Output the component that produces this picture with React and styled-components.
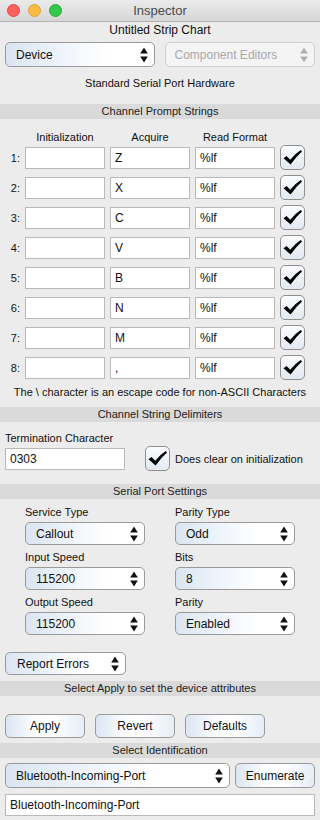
import styled, { createGlobalStyle } from 'styled-components';

const Global = createGlobalStyle`
  html, body {
    margin: 0;
    padding: 0;
    background: #ececec;
  }
  body {
    font-family: "Liberation Sans", Arial, sans-serif;
    color: #1a1a1a;
  }
`;

const Window = styled.div`
  width: 320px;
  height: 820px;
  background: #ececec;
  display: flex;
  flex-direction: column;
  overflow: hidden;
`;

const TitleBar = styled.div`
  height: 21px;
  flex-shrink: 0;
  position: relative;
  display: flex;
  align-items: center;
  justify-content: center;
  background: linear-gradient(#ebebeb, #d6d6d6);
  border-bottom: 1px solid #b3b3b3;
  font-size: 13px;
  color: #4a4a4a;
`;

const Lights = styled.div`
  position: absolute;
  left: 7px;
  top: 4px;
  display: flex;
  gap: 8px;
`;

const Light = styled.span`
  width: 11px;
  height: 11px;
  border-radius: 50%;
  background: ${p => p.$c};
  border: 0.5px solid ${p => p.$b};
`;

const Caption = styled.div`
  height: 16px;
  line-height: 16px;
  flex-shrink: 0;
  text-align: center;
  font-size: ${p => p.$size || 11}px;
  margin-top: ${p => p.$mt || 0}px;
  color: #111;
`;

const Band = styled.div`
  height: 15px;
  line-height: 15px;
  flex-shrink: 0;
  background: #dadada;
  text-align: center;
  font-size: 11px;
  color: #222;
  margin-top: ${p => p.$mt}px;
`;

const Line = styled.div`
  display: flex;
  align-items: center;
  flex-shrink: 0;
  gap: ${p => p.$gap || 10}px;
  padding: 0 ${p => (p.$flush ? 0 : 5)}px;
  margin-top: ${p => p.$mt || 0}px;
`;

const Popup = styled.div`
  box-sizing: border-box;
  width: ${p => p.$w}px;
  height: ${p => p.$h || 24}px;
  display: flex;
  align-items: center;
  justify-content: space-between;
  padding: 0 6px 0 ${p => p.$pl || 10}px;
  border: 1px solid ${p => (p.$disabled ? '#cfcfcf' : '#9a9a9a')};
  border-radius: 5px;
  font-size: 12px;
  color: ${p => (p.$disabled ? '#a8a8a8' : '#111')};
  background: ${p =>
    p.$disabled
      ? '#f4f4f4'
      : 'linear-gradient(to right, #dbe5f1 0%, #f3f7fc 45%, #ffffff 70%)'};
`;

const Button = styled.div`
  box-sizing: border-box;
  width: ${p => p.$w || 80}px;
  height: ${p => p.$h || 24}px;
  display: flex;
  align-items: center;
  justify-content: center;
  border: 1px solid #9a9a9a;
  border-radius: 5px;
  font-size: 12px;
  color: #111;
  background: linear-gradient(to right, #dce5f1 0%, #fafcfe 35%, #ffffff 60%, #e6edf6 100%);
`;

const Field = styled.div`
  box-sizing: border-box;
  width: ${p => p.$w}px;
  height: ${p => p.$h || 22}px;
  display: flex;
  align-items: center;
  padding-left: 4px;
  background: #fff;
  border: 1px solid #b9b9b9;
  font-size: 12px;
  color: #111;
`;

const CheckBox = styled.div`
  box-sizing: border-box;
  width: 25px;
  height: 25px;
  flex-shrink: 0;
  border: 1px solid #8f8f8f;
  border-radius: 5px;
  background: linear-gradient(#fbfcfe, #e3e9f2);
  display: flex;
  align-items: center;
  justify-content: center;
`;

const Grid = styled.div`
  display: grid;
  flex-shrink: 0;
  grid-template-columns: 20px 80px 80px 80px 25px;
  grid-auto-rows: ${p => p.$rowH}px;
  column-gap: 5px;
  row-gap: 5px;
  align-items: center;
  margin-top: ${p => p.$mt || 0}px;
`;

const ColHead = styled.div`
  text-align: center;
  font-size: 11px;
  line-height: 16px;
  color: #111;
  grid-column: ${p => p.$col};
`;

const RowLabel = styled.div`
  font-size: 11px;
  text-align: right;
  color: #111;
`;

const Label = styled.div`
  font-size: 11px;
  color: #111;
  height: 16px;
  line-height: 16px;
  flex-shrink: 0;
  margin-top: ${p => p.$mt || 0}px;
  padding-left: ${p => p.$pl || 0}px;
`;

const Settings = styled.div`
  display: grid;
  flex-shrink: 0;
  grid-template-columns: 120px 120px;
  column-gap: 30px;
  padding-left: 25px;
  margin-top: 5px;
`;

const Cell = styled.div`
  display: flex;
  flex-direction: column;
  gap: 2px;
  margin-top: ${p => p.$mt || 0}px;
`;

const Hint = styled.span`
  font-size: 11px;
  color: #111;
`;

function Stepper({ disabled }) {
  const c = disabled ? '#b0b0b0' : '#111';
  return (
    <svg width="8" height="16" viewBox="0 0 8 16">
      <path d="M4 0.5 L7.8 6.5 L0.2 6.5 Z" fill={c} />
      <path d="M0.2 9.5 L7.8 9.5 L4 15.5 Z" fill={c} />
    </svg>
  );
}

function Check() {
  return (
    <CheckBox>
      <svg width="21" height="17" viewBox="0 0 21 17">
        <path d="M1.5 9.2 L4.6 7 L8.2 10.8 Q12.5 5 18.8 1 L20 2.4 Q13.8 7.8 8.6 15.6 Z" fill="#000" />
      </svg>
    </CheckBox>
  );
}

function Select({ value, w, h, pl, disabled }) {
  return (
    <Popup $w={w} $h={h} $pl={pl} $disabled={disabled}>
      <span>{value}</span>
      <Stepper disabled={disabled} />
    </Popup>
  );
}

const acquire = ['Z', 'X', 'C', 'V', 'B', 'N', 'M', ','];

function PromptRow({ n, acq }) {
  return (
    <>
      <RowLabel>{n}:</RowLabel>
      <Field $w={80} />
      <Field $w={80}>{acq}</Field>
      <Field $w={80}>%lf</Field>
      <Check />
    </>
  );
}

export default function App() {
  return (
    <Window>
      <Global />
      <TitleBar>
        <Lights>
          <Light $c="#fc605c" $b="#de4a45" />
          <Light $c="#fdbc40" $b="#dea236" />
          <Light $c="#34c84a" $b="#27aa35" />
        </Lights>
        Inspector
      </TitleBar>

      <Caption $size={12}>Untitled Strip Chart</Caption>
      <Line $mt={4} $gap={10}>
        <Select value="Device" w={150} h={25} />
        <Select value="Component Editors" w={151} h={25} pl={9} disabled />
      </Line>
      <Caption $mt={8}>Standard Serial Port Hardware</Caption>

      <Band $mt={13}>Channel Prompt Strings</Band>
      <Grid $mt={10} $rowH={16}>
        <ColHead $col={2}>Initialization</ColHead>
        <ColHead $col={3}>Acquire</ColHead>
        <ColHead $col={4}>Read Format</ColHead>
      </Grid>
      <Grid $rowH={25}>
        {acquire.map((acq, i) => (
          <PromptRow key={i} n={i + 1} acq={acq} />
        ))}
      </Grid>
      <Caption $mt={4}>The \ character is an escape code for non-ASCII Characters</Caption>

      <Band $mt={7}>Channel String Delimiters</Band>
      <Label $mt={8} $pl={5}>Termination Character</Label>
      <Line $gap={20}>
        <Field $w={120} $h={22}>0303</Field>
        <Line $gap={5} $flush>
          <Check />
          <Hint>Does clear on initialization</Hint>
        </Line>
      </Line>

      <Band $mt={13}>Serial Port Settings</Band>
      <Settings>
        <Cell>
          <Label>Service Type</Label>
          <Select value="Callout" w={120} h={23} />
        </Cell>
        <Cell>
          <Label>Parity Type</Label>
          <Select value="Odd" w={120} h={23} />
        </Cell>
        <Cell $mt={4}>
          <Label>Input Speed</Label>
          <Select value="115200" w={120} h={23} />
        </Cell>
        <Cell $mt={4}>
          <Label>Bits</Label>
          <Select value="8" w={120} h={23} />
        </Cell>
        <Cell $mt={4}>
          <Label>Output Speed</Label>
          <Select value="115200" w={120} h={23} />
        </Cell>
        <Cell $mt={4}>
          <Label>Parity</Label>
          <Select value="Enabled" w={120} h={23} />
        </Cell>
      </Settings>

      <Line $mt={17}>
        <Select value="Report Errors" w={121} h={23} pl={11} />
      </Line>

      <Band $mt={6}>Select Apply to set the device attributes</Band>
      <Line $mt={18} $gap={10}>
        <Button>Apply</Button>
        <Button>Revert</Button>
        <Button>Defaults</Button>
      </Line>

      <Band $mt={5}>Select Identification</Band>
      <Line $mt={5} $gap={5}>
        <Select value="Bluetooth-Incoming-Port" w={226} h={25} />
        <Button $w={80} $h={25}>Enumerate</Button>
      </Line>
      <Line $mt={6}>
        <Field $w={310} $h={22}>Bluetooth-Incoming-Port</Field>
      </Line>
    </Window>
  );
}
